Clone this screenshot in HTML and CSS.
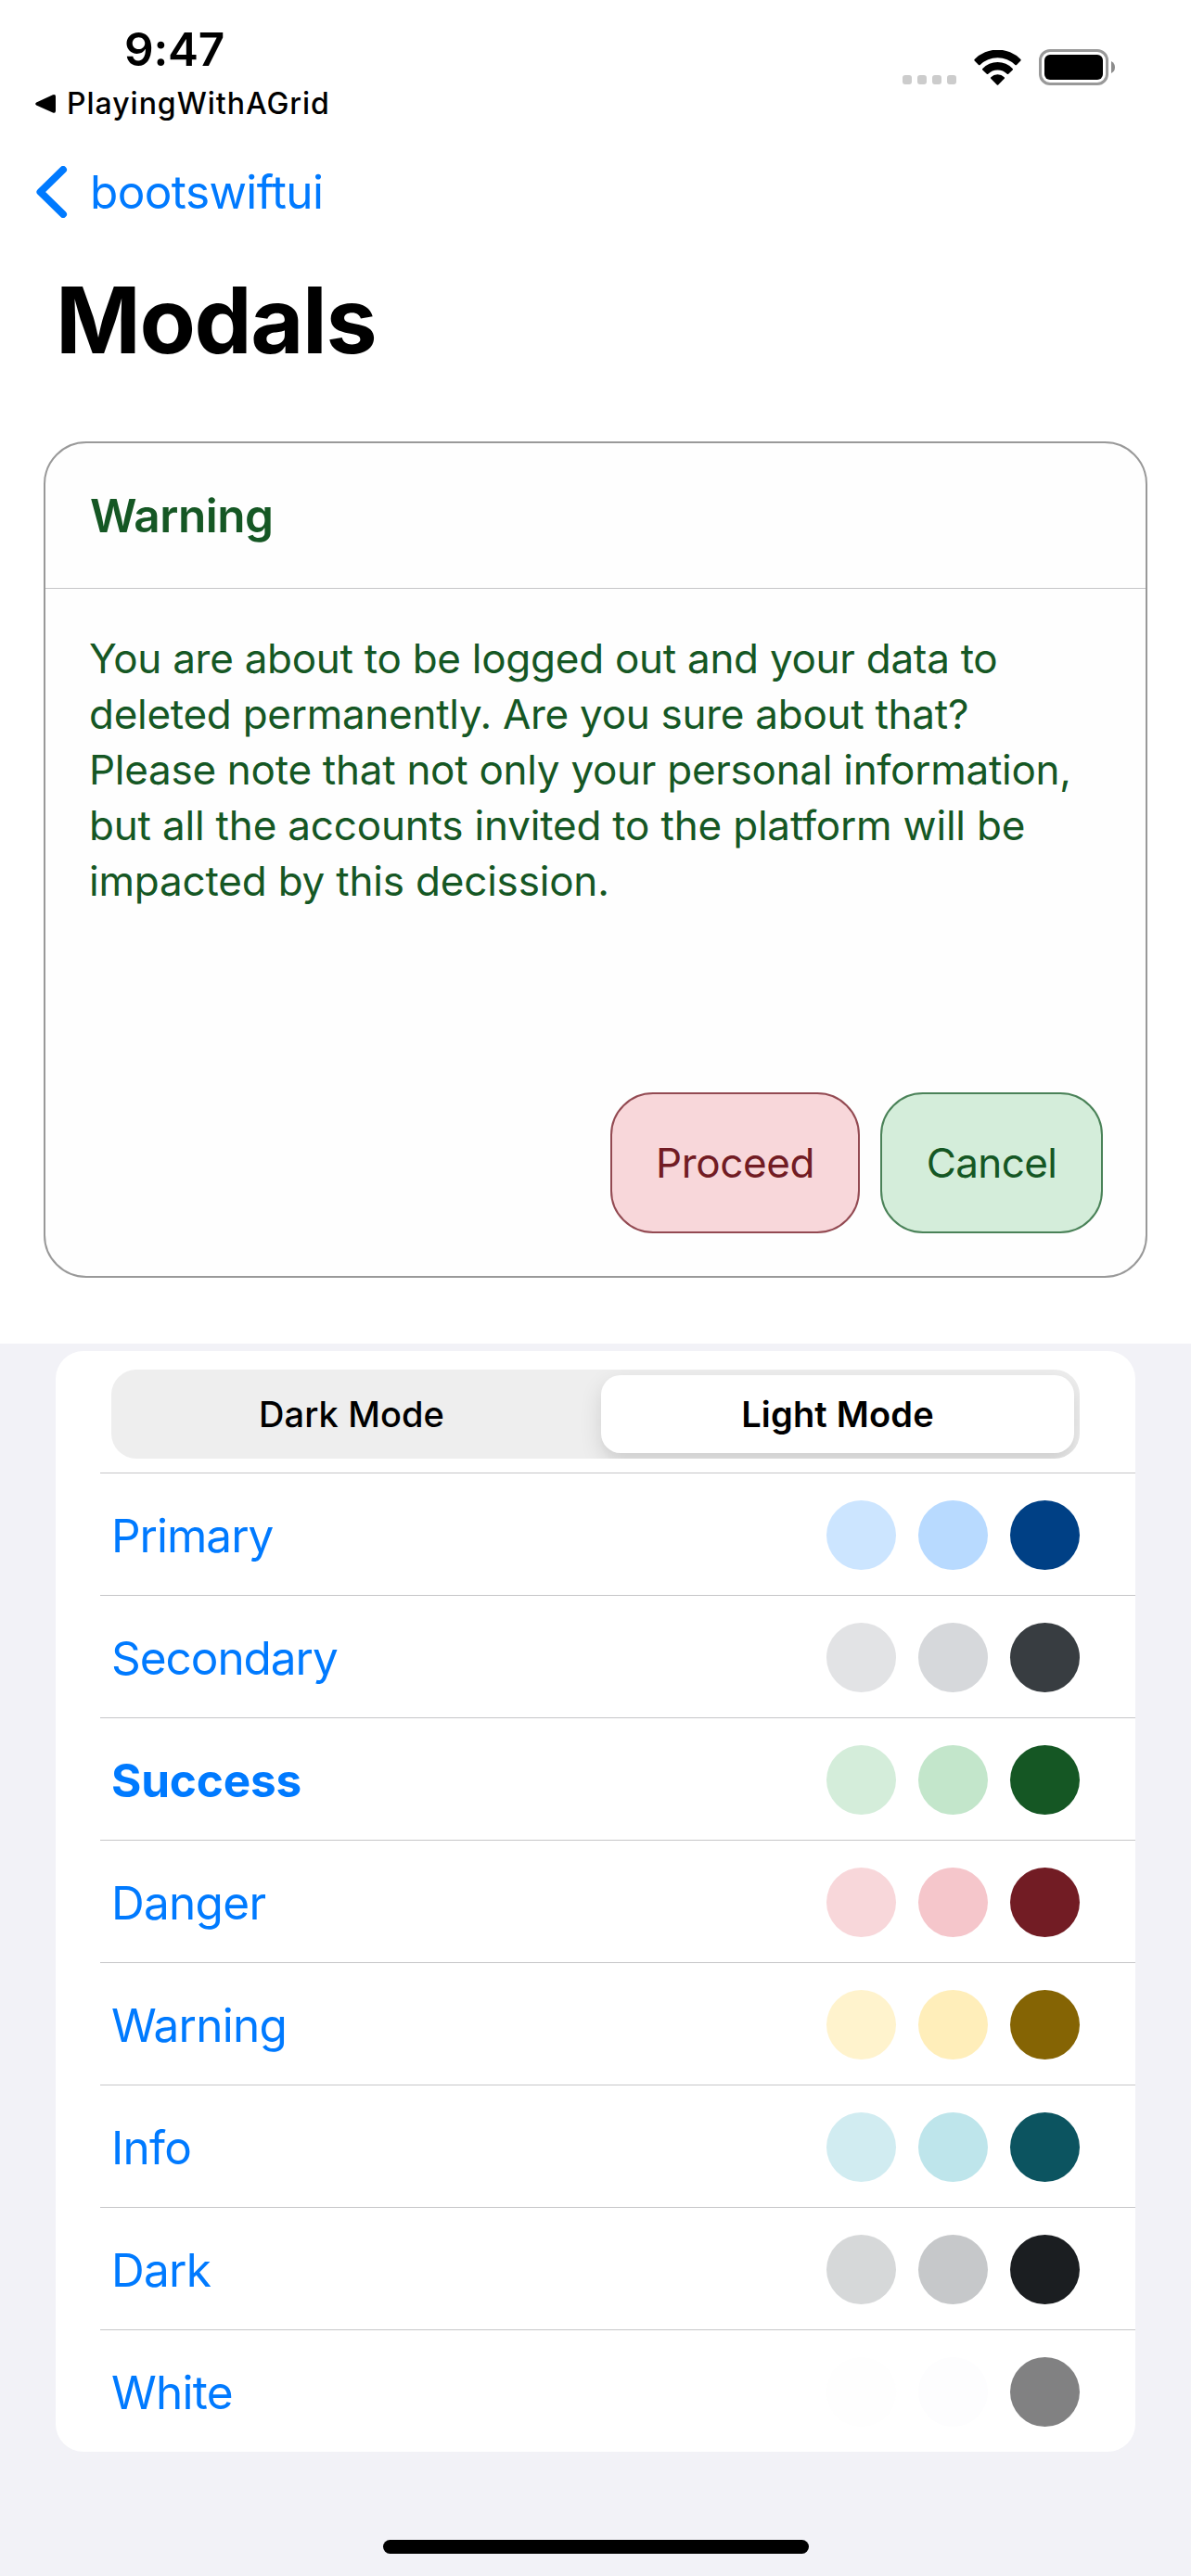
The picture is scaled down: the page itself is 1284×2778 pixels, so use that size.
FILE: index.html
```html
<!DOCTYPE html>
<html lang="en">
<head>
<meta charset="utf-8">
<title>Modals</title>
<link rel="stylesheet" href="styles.css">
</head>
<body>
<div class="screen">
  <header class="status-bar">
    <div class="status-left">
      <div class="clock">9:47</div>
      <div class="back-app">
        <svg class="back-app-icon" width="22" height="22" viewBox="0 0 22 22"><path d="M1.2 9.6 19 1.2Q22 .2 22 3V18.500Q22 21.500 19 20.500L1.200 12.400Q-.8 11 1.200 9.600Z"/></svg>
        <span>PlayingWithAGrid</span>
      </div>
    </div>
    <div class="status-icons">
      <div class="signal"><i></i><i></i><i></i><i></i></div>
      <svg class="wifi" width="51" height="38" viewBox="0 0 51 38">
        <path d="M.6 10A35 35 0 0 1 50.400 10Q51 10.800 50.400 11.400L46 15.900Q45.200 16.600 44.400 15.900A27 27 0 0 0 6.600 15.900Q5.800 16.600 5 15.900L.6 11.400Q0 10.800.6 10Z"/>
        <path d="M9.300 20.100A22 22 0 0 1 41.700 20.100Q42.400 20.800 41.700 21.500L37.200 25.700Q36.500 26.300 35.700 25.700A14.300 14.300 0 0 0 15.300 25.700Q14.500 26.300 13.800 25.700L9.300 21.500Q8.600 20.800 9.300 20.100Z"/>
        <path d="M18.300 29.200A10.500 10.500 0 0 1 32.700 29.200Q33.500 30 32.800 30.800L26.200 37.400Q25.500 38 24.800 37.400L18.200 30.800Q17.500 30 18.300 29.200Z"/>
      </svg>
      <svg class="battery" width="82" height="39" viewBox="0 0 82 39">
        <rect x="1.500" y="1.500" width="72" height="36" rx="10.500" fill="none" stroke="#999" stroke-width="3"/>
        <rect x="6" y="6" width="63" height="27" rx="6"/>
        <path d="M78 13Q82 15 82 19.500T78 26Z" fill="#8c8c8c"/>
      </svg>
    </div>
  </header>

  <nav class="nav">
    <svg class="chevron" width="36" height="56" viewBox="0 0 36 56"><path d="M29 4 4.500 28 29 52"/></svg>
    <span>bootswiftui</span>
  </nav>
  <h1 class="title">Modals</h1>

  <section class="modal">
    <h2 class="modal-title">Warning</h2>
    <p class="modal-text">You are about to be logged out and your data to<br>deleted permanently. Are you sure about that?<br>Please note that not only your personal information,<br><span class="loose">but all the accounts invited to the platform will be<br>impacted by this decission.</span></p>
    <div class="modal-actions">
      <button class="btn btn-danger">Proceed</button>
      <button class="btn btn-success">Cancel</button>
    </div>
  </section>

  <main class="panel">
    <div class="list">
      <div class="segment-row">
        <div class="segments">
          <div class="segment">Dark Mode</div>
          <div class="segment segment-on">Light Mode</div>
        </div>
      </div>
      <div class="row"><span class="label primary">Primary</span><div class="dots"><i style="background:#cce5ff"></i><i style="background:#b8daff"></i><i style="background:#004085"></i></div></div>
      <div class="row"><span class="label secondary">Secondary</span><div class="dots"><i style="background:#e2e3e5"></i><i style="background:#d6d8db"></i><i style="background:#383d41"></i></div></div>
      <div class="row"><span class="label selected">Success</span><div class="dots"><i style="background:#d4edda"></i><i style="background:#c3e6cb"></i><i style="background:#155724"></i></div></div>
      <div class="row"><span class="label">Danger</span><div class="dots"><i style="background:#f8d7da"></i><i style="background:#f5c6cb"></i><i style="background:#721c24"></i></div></div>
      <div class="row"><span class="label">Warning</span><div class="dots"><i style="background:#fff3cd"></i><i style="background:#ffeeba"></i><i style="background:#856404"></i></div></div>
      <div class="row"><span class="label">Info</span><div class="dots"><i style="background:#d1ecf1"></i><i style="background:#bee5eb"></i><i style="background:#0c5460"></i></div></div>
      <div class="row"><span class="label">Dark</span><div class="dots"><i style="background:#d6d8d9"></i><i style="background:#c6c8ca"></i><i style="background:#1b1e21"></i></div></div>
      <div class="row"><span class="label">White</span><div class="dots"><i style="background:#fefefe"></i><i style="background:#fdfdfe"></i><i style="background:#818182"></i></div></div>
    </div>
    <div class="home-indicator"></div>
  </main>
</div>
</body>
</html>
```
FILE: styles.css
```css
* { box-sizing: border-box; }

body {
  margin: 0;
  background: #fff;
  font-family: Inter, "Liberation Sans", sans-serif;
  color: #000;
}

.screen {
  width: 1284px;
  height: 2778px;
  display: flex;
  flex-direction: column;
  overflow: hidden;
}

/* Status bar */
.status-bar {
  height: 177px;
  display: flex;
  justify-content: space-between;
  padding: 23px 82px 0 38px;
}

.clock {
  padding-left: 96px;
  font-size: 49.5px;
  font-weight: 600;
  line-height: 60px;
  letter-spacing: -0.24px;
}

.back-app {
  display: flex;
  align-items: center;
  gap: 12px;
  margin-top: 9px;
  font-size: 32px;
  font-weight: 450;
  line-height: 40px;
  letter-spacing: 0.98px;
}

.status-icons {
  display: flex;
  align-items: flex-start;
  padding-top: 30px;
}

.signal {
  display: flex;
  gap: 6px;
  margin: 28px 19px 0 0;
}

.signal i {
  width: 10px;
  height: 10px;
  border-radius: 3px;
  background: #ccc;
}

.wifi { margin: 1px 19px 0 0; }

/* Navigation */
.nav {
  display: flex;
  align-items: center;
  height: 60px;
  padding-left: 39px;
  gap: 22px;
  color: #007aff;
  font-size: 49.5px;
  line-height: 60px;
  letter-spacing: -0.62px;
}

.chevron path {
  fill: none;
  stroke: #007aff;
  stroke-width: 8;
  stroke-linecap: round;
  stroke-linejoin: round;
}

.title {
  margin: 48px 0 0 60px;
  font-size: 98.6px;
  font-weight: 700;
  line-height: 120px;
  letter-spacing: -1.4px;
}

/* Modal card */
.modal {
  display: flex;
  flex-direction: column;
  height: 902px;
  margin: 71px 47px 0;
  border: 2px solid #999;
  border-radius: 46px;
  background: #fefefe;
  color: #155724;
}

.modal-title {
  height: 157px;
  margin: 0;
  padding: 48px 48px 0;
  border-bottom: 1px solid #c6c6c8;
  font-size: 49.5px;
  font-weight: 600;
  line-height: 60px;
  letter-spacing: -0.47px;
}

.modal-text {
  margin: 45px 0 0;
  padding-left: 47px;
  font-size: 44px;
  line-height: 60px;
  letter-spacing: -0.275px;
  white-space: nowrap;
}

.loose { letter-spacing: -0.19px; }

.modal-actions {
  display: flex;
  justify-content: flex-end;
  gap: 22px;
  margin-top: auto;
  padding: 0 46px 46px 0;
}

.btn {
  height: 152px;
  padding: 0;
  border: 2px solid;
  border-radius: 46px;
  font: 44px/60px Inter, "Liberation Sans", sans-serif;
}

.btn-danger {
  width: 269px;
  border-color: #934a52;
  background: #f8d7da;
  color: #721c24;
  letter-spacing: -0.38px;
}

.btn-success {
  width: 240px;
  border-color: #4a8258;
  background: #d4edda;
  color: #155724;
  letter-spacing: -0.6px;
}

/* Settings list */
.panel {
  display: flex;
  flex-direction: column;
  flex: 1;
  align-items: center;
  margin-top: 71px;
  padding-top: 8px;
  background: #f2f2f7;
}

.list {
  width: 1164px;
  border-radius: 30px;
  background: #fff;
}

.segment-row {
  height: 131px;
  padding: 20px 60px 0;
}

.segments {
  display: grid;
  grid-template-columns: 1fr 1fr;
  height: 96px;
  border-radius: 27px;
  background: #eee;
  overflow: hidden;
}

.segment {
  margin: 6px 8px 6px 4px;
  font-size: 38px;
  font-weight: 450;
  line-height: 84px;
  text-align: center;
  letter-spacing: 0.1px;
}

.segment-on {
  margin: 6px;
  border-radius: 21px;
  background: #fff;
  box-shadow: 0 9px 24px rgba(0, 0, 0, 0.12), 0 9px 3px rgba(0, 0, 0, 0.02);
  font-weight: 600;
  letter-spacing: 0.18px;
}

.row {
  display: flex;
  justify-content: space-between;
  align-items: center;
  height: 132px;
  margin-left: 48px;
  padding: 2px 60px 0 12px;
  border-top: 1px solid #c6c6c8;
}

.label {
  color: #007aff;
  font-size: 49.5px;
  line-height: 60px;
  letter-spacing: -0.72px;
}

.primary { letter-spacing: -1px; }
.secondary { letter-spacing: -1.05px; }
.selected { font-weight: 700; letter-spacing: -0.2px; }

.dots {
  display: flex;
  gap: 24px;
}

.dots i {
  width: 75px;
  height: 75px;
  border-radius: 50%;
}

.home-indicator {
  width: 459px;
  height: 15px;
  margin: auto 0 24px;
  border-radius: 8px;
  background: #000;
}
```
